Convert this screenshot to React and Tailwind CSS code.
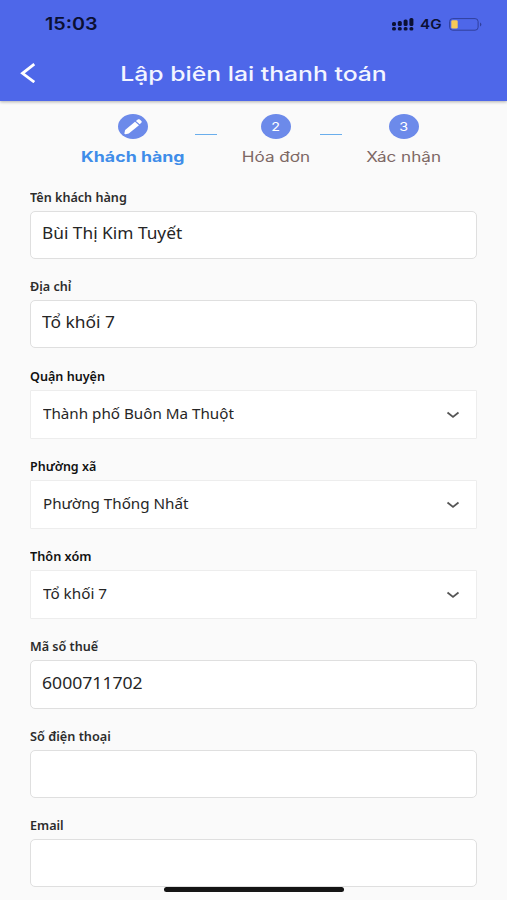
import React from 'react';
import clsx from 'clsx';

const fields = [
    { label: 'Tên khách hàng', value: 'Bùi Thị Kim Tuyết', type: 'input', row: 'h-[89px]', box: 'h-12', labelScale: 'scale-x-[1.05]', valueScale: 'scale-x-[1.115]' },
    { label: 'Địa chỉ', value: 'Tổ khối 7', type: 'input', row: 'h-[90px]', box: 'h-12', labelScale: 'scale-x-[1.05]', valueScale: 'scale-x-[1.12]' },
    { label: 'Quận huyện', value: 'Thành phố Buôn Ma Thuột', type: 'select', row: 'h-[90px]', box: 'h-[49px]', labelScale: 'scale-x-[1.05]', valueScale: 'scale-x-[1.085]' },
    { label: 'Phường xã', value: 'Phường Thống Nhất', type: 'select', row: 'h-[90px]', box: 'h-[49px]', labelScale: 'scale-x-[1.04]', valueScale: 'scale-x-[1.085]' },
    { label: 'Thôn xóm', value: 'Tổ khối 7', type: 'select', row: 'h-[90px]', box: 'h-[49px]', labelScale: 'scale-x-[1.06]', valueScale: 'scale-x-[1.09]' },
    { label: 'Mã số thuế', value: '6000711702', type: 'input', row: 'h-[90px]', box: 'h-[49px]', labelScale: 'scale-x-[1.05]', valueScale: 'scale-x-[1.135]' },
    { label: 'Số điện thoại', value: '', type: 'input', row: 'h-[89px]', box: 'h-12', labelScale: 'scale-x-[1.06]', valueScale: 'scale-x-[1.1]' },
    { label: 'Email', value: '', type: 'input', row: 'h-[72px]', box: 'h-12', labelScale: 'scale-x-[1.05]', valueScale: 'scale-x-[1.1]' },
];

const StatusBar = () => (
    <div className="flex h-12 items-center justify-between pl-[45px] pr-[25px] text-[#0b1033]">
        <span className="origin-left scale-x-[1.16] text-[17px] leading-5 font-semibold">15:03</span>
        <div className="flex items-center">
            <svg className="h-[13px] w-[22px]" viewBox="0 0 22 13" fill="currentColor">
                <rect x="0" y="4" width="4" height="4" rx="1.6" />
                <rect x="5.8" y="3" width="4" height="5" rx="1.6" />
                <rect x="11.6" y="1.5" width="4" height="6.5" rx="1.6" />
                <rect x="17.4" y="0" width="4" height="8" rx="1.6" />
                <rect x="0" y="9" width="4" height="3.6" rx="1.7" />
                <rect x="5.8" y="9" width="4" height="3.6" rx="1.7" />
                <rect x="11.6" y="9" width="4" height="3.6" rx="1.7" />
                <rect x="17.4" y="9" width="4" height="3.6" rx="1.7" />
            </svg>
            <span className="ml-[6px] w-[23px] origin-left scale-x-[1.17] text-[13px] leading-5 font-semibold">4G</span>
            <svg className="ml-[6px] h-[13px] w-[33px]" viewBox="0 0 33 13" fill="none">
                <rect x="0.6" y="0.6" width="28.5" height="11.6" rx="3" stroke="#303f9c" strokeWidth="1" />
                <rect x="2.3" y="2.2" width="6.4" height="8.4" rx="1.4" fill="#f9ca57" />
                <path d="M31 4.4c1 .5 1.4 1.2 1.4 2s-.4 1.500-1.400 2z" fill="#303f9c" />
            </svg>
        </div>
    </div>
);

const Header = () => (
    <header className="h-[101px] bg-[#4e67e9] shadow-[0_1px_3px_rgba(0,0,0,0.3)]">
        <StatusBar />
        <div className="grid h-[50px] grid-cols-[50px_1fr_50px] items-center">
            <svg className="ml-5 h-5 w-4" viewBox="0 0 16 20" fill="none" stroke="white" strokeWidth="2.8">
                <path d="M14.300 1.200 2.500 10.300l11.800 8.800" />
            </svg>
            <h1 className="mt-[2px] origin-center scale-x-[1.25] text-center text-[19.8px] leading-6 font-medium whitespace-nowrap text-[#f3f5ff]">Lập biên lai thanh toán</h1>
        </div>
    </header>
);

const Step = ({ children, label, active }) => (
    <div className="flex w-[108px] flex-col items-center">
        <div className="flex h-[25px] w-[30px] items-center justify-center rounded-[50%] bg-[#6c8aea] text-white">
            {children}
        </div>
        <span
            className={clsx(
                'mt-2 origin-center text-[14px] leading-5 whitespace-nowrap',
                active ? 'scale-x-[1.27] font-bold text-[#3f8de9]' : 'scale-x-[1.22] text-[#7d6865]'
            )}
        >
            {label}
        </span>
    </div>
);

const StepLine = () => <div className="mt-5 h-px w-[22px] bg-[#6aaeec]" />;

const Steps = () => (
    <div className="flex h-[83px] pt-[13px] pl-[79px]">
        <Step label="Khách hàng" active>
            <svg className="h-[17px] w-[20px]" viewBox="0 0 20 17" fill="white">
                <path d="M2.100 11.900 12 3.700l4 3.600-10.200 8.100-3.300.8c-.7.100-1.200-.3-1.100-.9z" />
                <path d="M12.900 3 14.800 1.500c.6-.5 1.400-.5 1.900 0l1.700 1.500c.5.500.5 1.200-.1 1.700l-1.600 1.600z" />
            </svg>
        </Step>
        <div className="ml-2"><StepLine /></div>
        <div className="ml-[5px]">
            <Step label="Hóa đơn"><span className="scale-x-[1.2] text-[12px] leading-none">2</span></Step>
        </div>
        <div className="-ml-[10px]"><StepLine /></div>
        <div className="ml-2">
            <Step label="Xác nhận"><span className="scale-x-[1.2] text-[12px] leading-none">3</span></Step>
        </div>
    </div>
);

const Field = ({ label, value, type, row, box, labelScale, valueScale }) => {
    const isSelect = type === 'select';

    return (
        <div className={row}>
            <div className="flex h-[27px] items-start pt-[3px]">
                <span className={clsx('origin-left text-[12px] leading-[22px] font-semibold whitespace-nowrap', labelScale, isSelect ? 'text-[#111]' : 'text-[#2c2c2c]')}>
                    {label}
                </span>
            </div>
            <div
                className={clsx(
                    'flex items-center justify-between border bg-white pr-4',
                    box,
                    isSelect ? 'rounded-[1px] border-[#ededed] pl-3 text-[14px]' : 'rounded-[5px] border-[#dfdfdf] pb-[2px] pl-[11px] text-[15.500px]'
                )}
            >
                <span className={clsx('origin-left whitespace-nowrap text-[#262626]', valueScale, isSelect && 'pb-[3px]')}>{value}</span>
                {isSelect && (
                    <svg className="h-2 w-[14px]" viewBox="0 0 14 8" fill="none" stroke="#555" strokeWidth="1.8">
                        <path d="m1.500 1.500 5.500 4.400 5.500-4.400" />
                    </svg>
                )}
            </div>
        </div>
    );
};

const App = () => {
    return (
        <div className="relative h-[900px] w-[507px] overflow-hidden bg-[#fafafa] font-['Inter',sans-serif]">
            <Header />
            <Steps />
            <main className="px-[30px] font-['Noto_Sans',sans-serif]">
                {fields.map((field) => (
                    <Field key={field.label} {...field} />
                ))}
            </main>

            {/* Home indicator */}
            <div className="absolute bottom-2 left-[164px] h-[5px] w-[180px] rounded-full bg-[#141414]" />
        </div>
    );
};

export default App;
